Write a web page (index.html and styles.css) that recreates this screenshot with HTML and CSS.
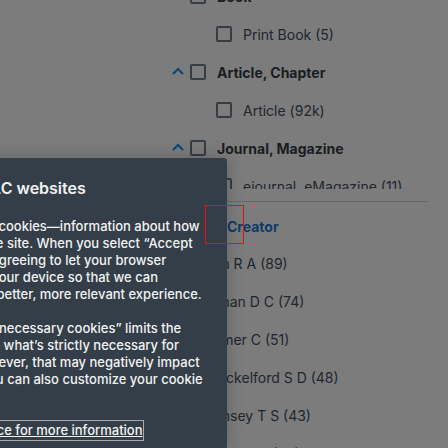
FILE: index.html
```html
<!DOCTYPE html>
<html lang="en">
<head>
<meta charset="utf-8">
<title>Search filters</title>
<link rel="stylesheet" href="styles.css">
</head>
<body>
<main class="filters">
  <section class="formats">
    <div class="row">
      <button class="toggle" aria-label="Collapse Book"><svg viewBox="0 0 14 14"><path d="M2 9L7 4L12 9"/></svg></button>
      <input type="checkbox" id="book"><label class="group" for="book">Book</label>
    </div>
    <div class="row child"><input type="checkbox" id="print"><label for="print">Print Book (5)</label></div>
    <div class="row">
      <button class="toggle" aria-label="Collapse Article, Chapter"><svg viewBox="0 0 14 14"><path d="M2 9L7 4L12 9"/></svg></button>
      <input type="checkbox" id="article"><label class="group" for="article">Article, Chapter</label>
    </div>
    <div class="row child"><input type="checkbox" id="art"><label for="art">Article (92k)</label></div>
    <div class="row">
      <button class="toggle" aria-label="Collapse Journal, Magazine"><svg viewBox="0 0 14 14"><path d="M2 9L7 4L12 9"/></svg></button>
      <input type="checkbox" id="journal"><label class="group" for="journal">Journal, Magazine</label>
    </div>
    <div class="row child"><input type="checkbox" id="ejournal"><label for="ejournal">ejournal, eMagazine (11)</label></div>
  </section>
  <section class="creators">
    <h2>Creator</h2>
    <ul>
      <li>Bain R A (89)</li>
      <li>Allman D C (74)</li>
      <li>Palmer C (51)</li>
      <li>Shackelford S D (48)</li>
      <li>Ramsey T S (43)</li>
      <li>Nauman e (42)</li>
    </ul>
  </section>
</main>
<div class="dialog" role="dialog" aria-labelledby="title">
  <h1 id="title">&nbsp;LC websites</h1>
  <p>s cookies—information about how<br>he site. When you select “Accept<br>&nbsp;agreeing to let your browser<br>&nbsp;your device so that we can<br>r better, more relevant experience.</p>
  <p>y necessary cookies” limits the<br>to what’s strictly necessary for<br>wever, that may negatively impact<br>ou can also customize your cookie</p>
  <a class="notice" href="#">tice for more information</a>
</div>
<div class="marker"></div>
</body>
</html>
```
FILE: styles.css
```css
* { box-sizing: border-box; }
html { height: 100%; }
body {
  margin: 0;
  height: 100%;
  overflow: hidden;
  position: relative;
  background: #7c7c7c;
  color: #20262c;
  font: 14px/20px Inter, "Liberation Sans", sans-serif;
}
.filters { margin: 0 20px 0 171px; }
.formats {
  height: 189px;
  overflow: hidden;
  display: flex;
  flex-direction: column;
  justify-content: flex-end;
}
.row {
  display: flex;
  flex: none;
  align-items: center;
  height: 38px;
}
.row:last-child { margin-bottom: -16px; }
.row label { padding-top: 2px; }
.child { padding-left: 45px; }
.toggle {
  width: 14px;
  height: 14px;
  margin-right: 5px;
  padding: 0;
  border: 0;
  background: none;
}
.toggle svg {
  display: block;
  fill: none;
  stroke: #0b4777;
  stroke-width: 2;
}
input {
  appearance: none;
  width: 16px;
  height: 16px;
  margin: 0 11px 0 0;
  border: 2px solid #363c43;
  border-radius: 2px;
}
.group {
  color: #191d21;
  font-weight: 700;
}
.creators {
  margin-top: 12px;
  border-top: 1px solid #686868;
}
h2 {
  margin: 0;
  padding: 15px 0 8px 56px;
  color: #0b3d69;
  font-size: 14px;
  line-height: 20px;
  font-weight: 700;
}
ul {
  margin: 0;
  padding: 0 0 0 30px;
  list-style: none;
}
li { line-height: 38px; }
.dialog {
  position: absolute;
  top: 158px;
  bottom: 0;
  left: -12px;
  width: 239px;
  padding: 20px 0;
  border-radius: 3px 3px 0 0;
  background: #333e48;
  box-shadow: 0 0 18px rgba(0, 0, 0, .2);
  color: #f2f2f2;
  font-size: 13px;
  line-height: 17px;
  font-weight: 500;
  white-space: nowrap;
}
h1 {
  margin: 0 0 20px;
  font-size: 16px;
  line-height: 20px;
  font-weight: 600;
}
p { margin: 0 0 17px; }
.notice {
  display: inline-block;
  margin-top: 15px;
  padding: 1px 0;
  border: 1px solid #a9a9a9;
  color: inherit;
}
.marker {
  position: absolute;
  top: 205px;
  left: 205px;
  width: 39px;
  height: 39px;
  border: 1px solid #f00c0c;
}
```
